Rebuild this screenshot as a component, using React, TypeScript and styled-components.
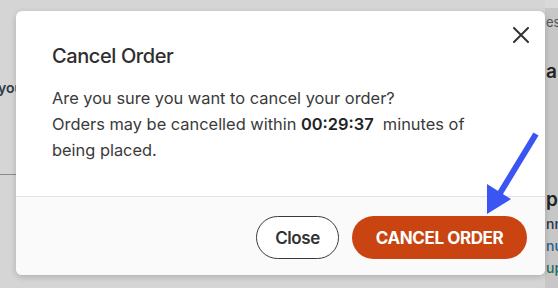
import React from "react";
import styled, { createGlobalStyle } from "styled-components";

const GlobalStyle = createGlobalStyle`
  html, body { margin: 0; padding: 0; }
  body {
    width: 558px;
    height: 288px;
    overflow: hidden;
    background: #d5d5d5;
    font-family: Inter, "Liberation Sans", Arial, sans-serif;
    color: #333;
  }
`;

const Page = styled.div`
  position: relative;
  width: 558px;
  height: 288px;
  display: grid;
  grid-template-columns: 16px 1fr 13px;
  overflow: hidden;
`;

const LeftPane = styled.div`
  display: flex;
  flex-direction: column;
  padding-top: 78px;
  overflow: hidden;
`;

const LeftText = styled.span`
  font-size: 14px;
  font-weight: 600;
  color: #2f3a44;
  margin-left: -2px;
  white-space: nowrap;
  line-height: 20px;
`;

const LeftRule = styled.div`
  margin-top: 76px;
  height: 1px;
  background: #8a8a8a;
`;

const RightPane = styled.div`
  background: #c7c7c7;
  display: flex;
  flex-direction: column;
  overflow: hidden;
  border-top: 8px solid #dadada;
`;

const RightText = styled.span<{ $size: number; $weight: number; $top: number; $color: string }>`
  font-size: ${(p) => p.$size}px;
  font-weight: ${(p) => p.$weight};
  color: ${(p) => p.$color};
  margin-top: ${(p) => p.$top}px;
  line-height: 20px;
  white-space: nowrap;
  margin-left: 1px;
`;

const Modal = styled.div`
  position: absolute;
  left: 16px;
  top: 11px;
  width: 529px;
  height: 264px;
  background: #ffffff;
  border-radius: 6px;
  box-shadow: 0 2px 6px rgba(0, 0, 0, 0.18);
  display: flex;
  flex-direction: column;
  overflow: hidden;
`;

const Body = styled.div`
  position: relative;
  padding: 33px 36px 0 36px;
  height: 186px;
  box-sizing: border-box;
  border-bottom: 1px solid #e2e2e2;
`;

const Title = styled.h2`
  margin: 0 0 17px 0;
  font-size: 20px;
  line-height: 24px;
  font-weight: 500;
  letter-spacing: -0.4px;
  color: #2e2e2e;
`;

const Text = styled.p`
  margin: 0;
  max-width: 420px;
  font-size: 16.4px;
  line-height: 26px;
  font-weight: 400;
  letter-spacing: 0;
  color: #3a3a3a;
`;

const Timer = styled.strong`
  font-weight: 600;
  color: #222;
`;

const CloseIcon = styled.button`
  position: absolute;
  top: 16px;
  right: 16px;
  width: 16px;
  height: 16px;
  padding: 0;
  border: none;
  background: none;
  display: flex;
  cursor: pointer;
`;

const Footer = styled.div`
  flex: 1;
  background: #fafafa;
  display: flex;
  justify-content: flex-end;
  align-items: flex-start;
  gap: 13px;
  padding: 19px 18px 0 0;
`;

const Button = styled.button<{ $primary?: boolean }>`
  height: 43px;
  box-sizing: border-box;
  border-radius: 22px;
  font-family: Inter, "Liberation Sans", Arial, sans-serif;
  font-size: 17px;
  font-weight: ${(p) => (p.$primary ? 700 : 600)};
  letter-spacing: -0.4px;
  cursor: pointer;
  padding: 0;
  width: ${(p) => (p.$primary ? "175px" : "83px")};
  background: ${(p) => (p.$primary ? "#c94411" : "#ffffff")};
  color: ${(p) => (p.$primary ? "#ffffff" : "#333333")};
  border: ${(p) => (p.$primary ? "none" : "1.5px solid #3a3a3a")};
`;

const Pointer = styled.svg`
  position: absolute;
  left: 0;
  top: 0;
  width: 558px;
  height: 288px;
  pointer-events: none;
`;

export default function App() {
  return (
    <>
      <GlobalStyle />
      <Page>
        <LeftPane>
          <LeftText>you</LeftText>
          <LeftRule />
        </LeftPane>
        <div />
        <RightPane>
          <RightText $size={13} $weight={400} $top={4} $color="#555">es</RightText>
          <RightText $size={19} $weight={600} $top={30} $color="#222">a</RightText>
          <RightText $size={19} $weight={600} $top={108} $color="#222">p</RightText>
          <RightText $size={14} $weight={500} $top={4} $color="#2b3540">nn</RightText>
          <RightText $size={14} $weight={500} $top={2} $color="#2f5c86">nu</RightText>
          <RightText $size={14} $weight={500} $top={2} $color="#2a6d5a">up</RightText>
        </RightPane>
        <Modal>
          <Body>
            <CloseIcon aria-label="Close">
              <svg width="16" height="16" viewBox="0 0 16 16">
                <path d="M1 1 L15 15 M15 1 L1 15" stroke="#333" strokeWidth="2" strokeLinecap="round" />
              </svg>
            </CloseIcon>
            <Title>Cancel Order</Title>
            <Text>Are you sure you want to cancel your order?</Text>
            <Text>
              Orders may be cancelled within <Timer>00:29:37</Timer>&nbsp; minutes of being placed.
            </Text>
          </Body>
          <Footer>
            <Button>Close</Button>
            <Button $primary>CANCEL ORDER</Button>
          </Footer>
        </Modal>
        <Pointer viewBox="0 0 558 288">
          <line x1="536" y1="134" x2="494" y2="203" stroke="#3b55f2" strokeWidth="6" strokeLinecap="butt" />
          <polygon points="487,214 487,184 511,199" fill="#3b55f2" />
        </Pointer>
      </Page>
    </>
  );
}
